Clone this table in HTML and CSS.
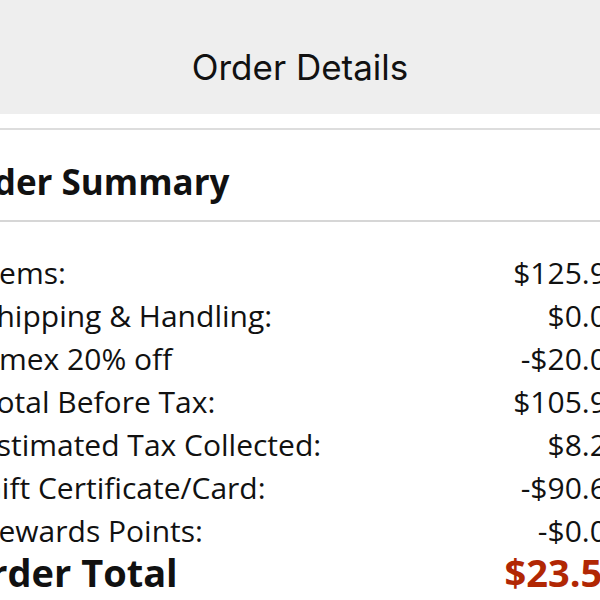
FILE: index.html
```html
<!DOCTYPE html>
<html lang="en">
<head>
<meta charset="utf-8">
<title>Order Details</title>
<link rel="stylesheet" href="styles.css">
</head>
<body>
  <header class="topbar">
    <h1 class="topbar-title">Order Details</h1>
  </header>
  <div class="topbar-gap"></div>
  <main class="sheet">
    <h2 class="summary-title">Order Summary</h2>
    <div class="summary-rows">
      <div class="row"><span class="label">Items:</span><span class="amount">$125.99</span></div>
      <div class="row"><span class="label">Shipping &amp; Handling:</span><span class="amount">$0.00</span></div>
      <div class="row"><span class="label">Amex 20% off</span><span class="amount">-$20.00</span></div>
      <div class="row"><span class="label">Total Before Tax:</span><span class="amount">$105.99</span></div>
      <div class="row"><span class="label">Estimated Tax Collected:</span><span class="amount">$8.27</span></div>
      <div class="row"><span class="label">Gift Certificate/Card:</span><span class="amount">-$90.67</span></div>
      <div class="row"><span class="label">Rewards Points:</span><span class="amount">-$0.05</span></div>
      <div class="row row-total"><span class="label">Order Total</span><span class="amount">$23.54</span></div>
    </div>
  </main>
</body>
</html>
```
FILE: styles.css
```css
html, body {
  margin: 0;
  padding: 0;
  background: #ffffff;
  overflow: hidden;
}
body {
  width: 600px;
  height: 600px;
  font-family: "Open Sans", "Noto Sans", sans-serif;
  color: #111111;
}
.topbar {
  height: 114px;
  background: #eeeeee;
  display: flex;
  align-items: flex-end;
  justify-content: center;
}
.topbar-title {
  margin: 0 0 26px 0;
  font-family: Inter, Roboto, sans-serif;
  font-weight: 400;
  font-size: 35px;
  line-height: 42px;
  color: #111111;
}
.topbar-gap {
  height: 14px;
  border-bottom: 2px solid #dddddd;
}
.sheet {
  margin-left: -20px;
  margin-right: -24px;
}
.summary-title {
  margin: 0;
  height: 92px;
  box-sizing: border-box;
  padding-top: 29px;
  text-indent: -30px;
  font-size: 35px;
  line-height: 46px;
  font-weight: 700;
  border-bottom: 2px solid #d6d6d6;
}
.summary-rows {
  padding-top: 29px;
}
.row {
  display: flex;
  justify-content: space-between;
  font-size: 30px;
  line-height: 43px;
}
.row-total {
  font-size: 38px;
  font-weight: 700;
  margin-top: -1px;
}
.row-total .label {
  margin-left: -20px;
}
.row-total .amount {
  color: #b12704;
}
```
